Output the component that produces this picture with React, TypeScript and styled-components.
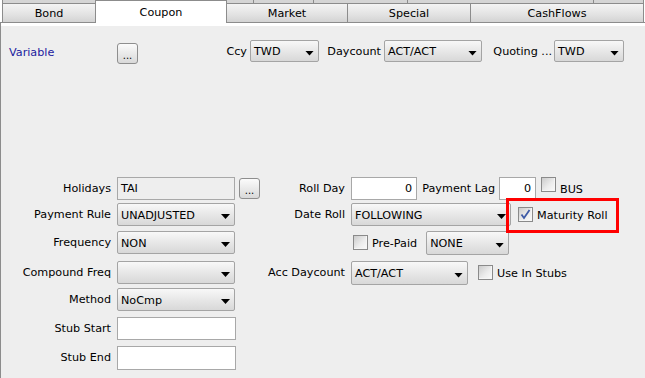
import React from 'react';
import styled, { createGlobalStyle } from 'styled-components';

const GlobalStyle = createGlobalStyle`
    html, body {
        margin: 0;
        padding: 0;
        background: #ffffff;
    }
    body {
        font-family: 'DejaVu Sans', Verdana, sans-serif;
        font-size: 11.2px;
        color: #000000;
    }
    * {
        box-sizing: border-box;
    }
`;

const Window = styled.div`
    width: 645px;
    height: 378px;
    display: flex;
    flex-direction: column;
    overflow: hidden;
    background: #ffffff;
`;

// second (hidden) row of tabs, only its bottom edge shows
const BackRow = styled.div`
    display: flex;
    height: 3px;
    padding-left: 2px;
`;

const BackTab = styled.div<{ $w: number }>`
    width: ${({ $w }) => $w}px;
    background: #d5d5d5;
    border-right: 1px solid #8c8c8c;
    &:first-child {
        border-left: 1px solid #8c8c8c;
    }
`;

const TabRow = styled.div`
    display: flex;
    align-items: flex-start;
    height: 20px;
    padding-left: 2px;
    border-bottom: 1px solid #8c8c8c;
`;

const Tab = styled.div<{ $w: number; $active?: boolean }>`
    width: ${({ $w }) => $w}px;
    height: ${({ $active }) => ($active ? 23 : 19)}px;
    margin-top: ${({ $active }) => ($active ? -3 : 0)}px;
    margin-right: ${({ $active }) => ($active ? -1 : 0)}px;
    position: relative;
    z-index: ${({ $active }) => ($active ? 1 : 0)};
    display: flex;
    align-items: center;
    justify-content: center;
    padding-top: ${({ $active }) => ($active ? 0 : 1)}px;
    border: 1px solid #8c8c8c;
    border-bottom: none;
    border-right-width: ${({ $active }) => ($active ? 1 : 0)}px;
    background: ${({ $active }) => ($active ? '#ffffff' : 'linear-gradient(#f4f4f4, #e2e2e2 60%, #d3d3d3)')};
    white-space: nowrap;
    &:last-child {
        border-right-width: 1px;
    }
`;

const Panel = styled.div`
    flex: 1;
    display: flex;
    flex-direction: column;
    padding-top: 17px;
    border-left: 1px solid #8c8c8c;
    background: linear-gradient(#ffffff 0 3px, #eeeeee 3px);
`;

const TopRow = styled.div`
    display: flex;
    height: 24px;
`;

const LinkText = styled.div`
    width: 116px;
    padding: 1px 0 0 8px;
    align-self: center;
    color: #1c1c9e;
`;

const InlineLabel = styled.span<{ $w: number; $gap?: number }>`
    width: ${({ $w }) => $w}px;
    flex: none;
    height: 23px;
    line-height: 23px;
    padding-right: ${({ $gap }) => $gap ?? 3}px;
    text-align: right;
    white-space: nowrap;
`;

const RowLabel = styled.div`
    height: 23px;
    line-height: 23px;
    padding-right: 1px;
    text-align: right;
    white-space: nowrap;
`;

const Combo = styled.div<{ $w: number; $h?: number; $ml?: number }>`
    width: ${({ $w }) => $w}px;
    height: ${({ $h }) => $h ?? 23}px;
    margin-left: ${({ $ml }) => $ml ?? 0}px;
    flex: none;
    display: flex;
    align-items: center;
    padding: 1px 4px 0 3px;
    border: 1px solid #a4a4a4;
    border-radius: 2px;
    background: linear-gradient(#f8f8f8, #e6e6e6 55%, #d8d8d8);
    white-space: nowrap;

    &::after {
        content: '';
        flex: none;
        width: 9px;
        height: 5px;
        margin: 3px 0 0 auto;
        background: #000000;
        clip-path: polygon(0 0, 100% 0, 50% 100%);
    }
`;

const TextField = styled.div<{ $w: number; $h?: number; $right?: boolean; $readOnly?: boolean; $ml?: number }>`
    width: ${({ $w }) => $w}px;
    height: ${({ $h }) => $h ?? 23}px;
    margin-left: ${({ $ml }) => $ml ?? 0}px;
    flex: none;
    padding: 1px 4px 0 3px;
    line-height: ${({ $h }) => ($h ?? 23) - 3}px;
    text-align: ${({ $right }) => ($right ? 'right' : 'left')};
    border: 1px solid #a8a8a8;
    background: ${({ $readOnly }) => ($readOnly ? '#eeeeee' : '#ffffff')};
`;

const DotsButton = styled.button<{ $ml?: number; $mt?: number }>`
    width: 21px;
    height: 21px;
    margin: ${({ $mt }) => $mt ?? 0}px 0 0 ${({ $ml }) => $ml ?? 0}px;
    flex: none;
    display: flex;
    align-items: flex-end;
    justify-content: center;
    padding: 0 0 2px;
    border: 1px solid #8e8e8e;
    border-radius: 3px;
    background: linear-gradient(#fbfbfb, #e8e8e8 55%, #d9d9d9);
    font: inherit;
    font-size: 10px;
    line-height: 1;
    color: #000000;
`;

const FormGrid = styled.div`
    display: grid;
    grid-template-columns: 111px 123px 25px 86px 1fr;
    grid-template-rows: 26px 28px 30px 27px 29px 29px 24px;
    align-items: start;
    margin-top: 113px;
`;

const Control = styled.div`
    display: flex;
    margin-left: 5px;
`;

const CheckItem = styled.label<{ $ml?: number; $top?: boolean }>`
    position: relative;
    flex: none;
    display: flex;
    align-items: ${({ $top }) => ($top ? 'flex-start' : 'center')};
    gap: 4px;
    height: 23px;
    margin-left: ${({ $ml }) => $ml ?? 0}px;
    white-space: nowrap;
`;

const CheckText = styled.span<{ $top?: boolean }>`
    line-height: ${({ $top }) => ($top ? '23px' : 'normal')};
    margin-top: 1px;
`;

const Box = styled.span`
    width: 15px;
    height: 15px;
    flex: none;
    display: flex;
    border: 1px solid #8a8a8a;
    background: linear-gradient(135deg, #cbcbcb, #ececec 55%, #fbfbfb);
    box-shadow: inset -1px -1px 0 #f6f6f6;
`;

const Highlight = styled.span`
    position: absolute;
    left: -12px;
    top: -5px;
    width: 113px;
    height: 35px;
    border: 3px solid #ff0000;
    pointer-events: none;
`;

function CheckBox({ checked }: { checked?: boolean }) {
    return (
        <Box>
            {checked && (
                <svg width='13' height='13' viewBox='0 0 13 13'>
                    <path d='M2.5 6.5 L5 10 L10.5 2' fill='none' stroke='#3d5aa6' strokeWidth='1.8' />
                </svg>
            )}
        </Box>
    );
}

const backTabs = [252, 60, 94, 186, 50];

const tabs = [
    { label: 'Bond', w: 93 },
    { label: 'Coupon', w: 132, active: true },
    { label: 'Market', w: 121 },
    { label: 'Special', w: 123 },
    { label: 'CashFlows', w: 174 },
];

export default function App() {
    return (
        <>
            <GlobalStyle />
            <Window>
                <BackRow>
                    {backTabs.map((w, i) => (
                        <BackTab key={i} $w={w} />
                    ))}
                </BackRow>
                <TabRow>
                    {tabs.map((t) => (
                        <Tab key={t.label} $w={t.w} $active={t.active}>
                            {t.label}
                        </Tab>
                    ))}
                </TabRow>

                <Panel>
                    <TopRow>
                        <LinkText>Variable</LinkText>
                        <DotsButton $mt={3}>...</DotsButton>
                        <InlineLabel $w={112}>Ccy</InlineLabel>
                        <Combo $w={69} $h={22}>TWD</Combo>
                        <InlineLabel $w={65}>Daycount</InlineLabel>
                        <Combo $w={98} $h={22}>ACT/ACT</Combo>
                        <InlineLabel $w={72} $gap={2}>
                            Quoting ...
                        </InlineLabel>
                        <Combo $w={70} $h={22}>TWD</Combo>
                    </TopRow>

                    <FormGrid>
                        {/* row: holidays / roll day */}
                        <RowLabel>Holidays</RowLabel>
                        <Control>
                            <TextField $w={118} $readOnly>
                                TAI
                            </TextField>
                        </Control>
                        <DotsButton $ml={4} $mt={1}>
                            ...
                        </DotsButton>
                        <RowLabel>Roll Day</RowLabel>
                        <Control>
                            <TextField $w={66} $right>
                                0
                            </TextField>
                            <InlineLabel $w={82} $gap={4}>
                                Payment Lag
                            </InlineLabel>
                            <TextField $w={37} $right>
                                0
                            </TextField>
                            <CheckItem $ml={5} $top>
                                <CheckBox />
                                <CheckText $top>BUS</CheckText>
                            </CheckItem>
                        </Control>

                        {/* row: payment rule / date roll */}
                        <RowLabel>Payment Rule</RowLabel>
                        <Control>
                            <Combo $w={118}>UNADJUSTED</Combo>
                        </Control>
                        <span />
                        <RowLabel>Date Roll</RowLabel>
                        <Control>
                            <Combo $w={160}>FOLLOWING</Combo>
                            <CheckItem $ml={7}>
                                <CheckBox checked />
                                <CheckText>Maturity Roll</CheckText>
                                <Highlight />
                            </CheckItem>
                        </Control>

                        {/* row: frequency / pre-paid */}
                        <RowLabel>Frequency</RowLabel>
                        <Control>
                            <Combo $w={118}>NON</Combo>
                        </Control>
                        <span />
                        <span />
                        <Control>
                            <CheckItem $ml={2}>
                                <CheckBox />
                                <CheckText>Pre-Paid</CheckText>
                            </CheckItem>
                            <Combo $w={83} $h={24} $ml={9}>
                                NONE
                            </Combo>
                        </Control>

                        {/* row: compound freq / acc daycount */}
                        <RowLabel>Compound Freq</RowLabel>
                        <Control>
                            <Combo $w={118} />
                        </Control>
                        <span />
                        <RowLabel>Acc Daycount</RowLabel>
                        <Control>
                            <Combo $w={117} $h={24}>
                                ACT/ACT
                            </Combo>
                            <CheckItem $ml={10}>
                                <CheckBox />
                                <CheckText>Use In Stubs</CheckText>
                            </CheckItem>
                        </Control>

                        <RowLabel>Method</RowLabel>
                        <Control>
                            <Combo $w={118}>NoCmp</Combo>
                        </Control>
                        <span />
                        <span />
                        <span />

                        <RowLabel>Stub Start</RowLabel>
                        <Control>
                            <TextField $w={119} />
                        </Control>
                        <span />
                        <span />
                        <span />

                        <RowLabel>Stub End</RowLabel>
                        <Control>
                            <TextField $w={119} $h={24} />
                        </Control>
                    </FormGrid>
                </Panel>
            </Window>
        </>
    );
}
